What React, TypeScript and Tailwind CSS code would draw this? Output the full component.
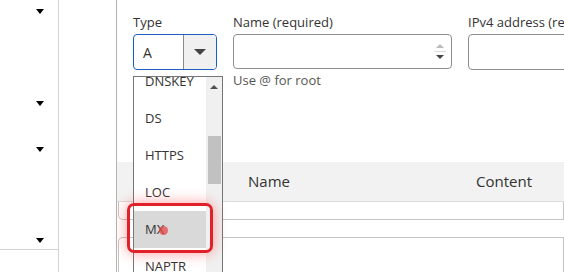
const types = ["DNSKEY", "DS", "HTTPS", "LOC", "MX", "NAPTR"];

function Caret() {
  return <div className="w-0 h-0 border-l-[4px] border-r-[4px] border-t-[5px] border-l-transparent border-r-transparent border-t-black" />;
}

export default function App() {
  return (
    <div className="flex w-[564px] h-[272px] overflow-hidden bg-white text-[#333] font-['Open_Sans',sans-serif]">
      {/* Sidebar */}
      <div className="w-[59px] shrink-0 border-r border-[#d4d4d4] flex flex-col">
        <div className="h-[22px] flex items-center justify-end pr-[14px]"><Caret /></div>
        <div className="h-[22px] mt-[70px] flex items-center justify-end pr-[14px]"><Caret /></div>
        <div className="h-[22px] mt-[24px] flex items-center justify-end pr-[14px]"><Caret /></div>
        <div className="h-[19px] mt-[71px] flex items-center justify-end pr-[14px] border-b border-[#d4d4d4]"><Caret /></div>
      </div>
      <div className="w-[58px] shrink-0 border-r border-[#b4b4b4]" />

      {/* Main */}
      <div className="relative flex-1 min-w-0 flex flex-col">
        <div className="h-[162px] shrink-0 flex gap-[16px] pl-[16px] pt-[13px] text-[13px]">
          <div className="w-[84px] shrink-0">
            <div className="h-[21px] leading-[18px]">Type</div>
            <div className="h-[36px] flex border border-[#1a5fc4] rounded-[4px] overflow-hidden">
              <div className="flex-1 flex items-center pl-[9px] text-[14px]">A</div>
              <div className="w-[33px] flex items-center justify-center bg-[#f0f0f0] border-l border-[#8a8a8a]">
                <div className="w-0 h-0 border-l-[6px] border-r-[6px] border-t-[6px] border-l-transparent border-r-transparent border-t-[#444]" />
              </div>
            </div>
          </div>
          <div className="w-[219px] shrink-0">
            <div className="h-[21px] leading-[18px]">Name (required)</div>
            <div className="h-[35px] flex justify-end border border-[#8f8f8f] rounded-[4px] pr-[5px]">
              <div className="w-[12px] flex flex-col items-center justify-center gap-[3px]">
                <div className="w-0 h-0 border-l-[4px] border-r-[4px] border-b-[4px] border-l-transparent border-r-transparent border-b-[#bbb]" />
                <div className="w-[11px] h-px bg-[#d6d6d6]" />
                <div className="w-0 h-0 border-l-[4px] border-r-[4px] border-t-[4px] border-l-transparent border-r-transparent border-t-[#444]" />
              </div>
            </div>
            <div className="mt-[2px] text-[#555]">Use @ for root</div>
          </div>
          <div className="w-[160px] shrink-0 whitespace-nowrap">
            <div className="h-[21px] leading-[18px]">IPv4 address (required)</div>
            <div className="h-[36px] border border-[#8f8f8f] rounded-[4px]" />
          </div>
        </div>

        {/* Table */}
        <div className="h-[40px] shrink-0 flex items-center bg-[#f2f2f2] border-b border-[#dcdcdc] text-[15px]">
          <div className="w-[359px] pl-[131px]">Name</div>
          <div>Content</div>
        </div>
        <div className="h-[18px] shrink-0 ml-[1px] border border-t-0 border-[#c4c4c4] rounded-bl-[5px]" />
        <div className="h-[40px] shrink-0 mt-[17px] ml-[1px] border border-b-0 border-[#c4c4c4] rounded-tl-[5px]" />

        {/* Open dropdown */}
        <div className="absolute left-[16px] top-[76px] w-[90px] h-[210px] bg-white border border-[#767676] flex overflow-hidden text-[13px]">
          <div className="flex-1 flex flex-col -mt-[14px]">
            {types.map((t) => (
              <div key={t} className={`h-[37px] shrink-0 flex items-center pl-[11px] ${t === "MX" ? "bg-[#d9d9d9]" : ""}`}>
                {t}
              </div>
            ))}
          </div>
          <div className="w-[16px] bg-[#f0f0f0] flex flex-col items-center">
            <div className="mt-[8px] w-0 h-0 border-l-[4px] border-r-[4px] border-b-[4px] border-l-transparent border-r-transparent border-b-[#505050]" />
            <div className="mt-[47px] w-[13px] h-[48px] bg-[#c1c1c1]" />
          </div>
        </div>

        {/* Highlight */}
        <div className="absolute left-[10px] top-[203px] w-[86px] h-[50px] border-[3px] border-[#e0202a] rounded-[7px] shadow-[0_0_14px_rgba(255,40,40,0.45)]" />
        <div className="absolute left-[42px] top-[226px] w-[9px] h-[9px] rounded-full bg-[rgba(232,70,70,0.75)]" />
      </div>
    </div>
  );
}
